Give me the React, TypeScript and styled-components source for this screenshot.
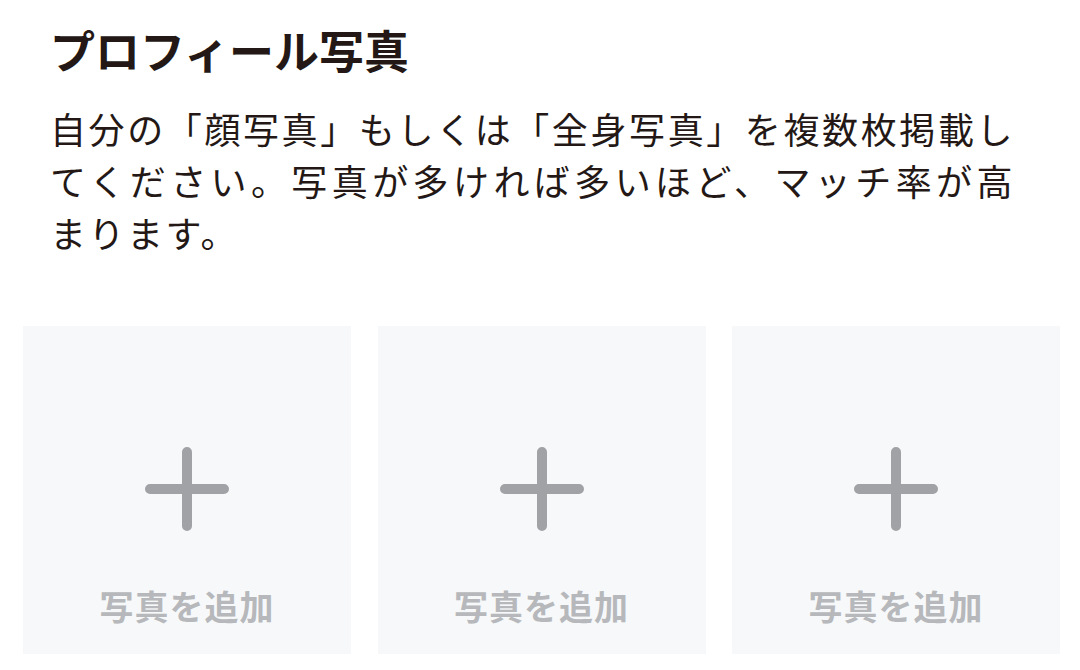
import React from 'react';
import styled, { createGlobalStyle } from 'styled-components';

const GlobalStyle = createGlobalStyle`
  html, body {
    margin: 0;
    padding: 0;
    background: #ffffff;
  }
  body {
    font-family: "Noto Sans CJK JP", "Noto Sans", sans-serif;
    color: #231815;
  }
`;

const Page = styled.div`
  width: 1080px;
  height: 670px;
  overflow: hidden;
  padding-top: 22px;
  box-sizing: border-box;
`;

const Header = styled.div`
  padding: 0 50px;
`;

const Title = styled.h1`
  margin: 0;
  font-size: 45px;
  line-height: 55px;
  font-weight: 700;
  letter-spacing: 0;
`;

const Description = styled.p`
  margin: 25px 0 0;
  width: 965px;
  font-size: 36px;
  line-height: 52px;
  letter-spacing: 2.5px;
  font-weight: 400;
`;

const Line = styled.span<{ $fill?: boolean }>`
  display: block;
  text-align: ${(p) => (p.$fill ? 'justify' : 'left')};
  text-align-last: ${(p) => (p.$fill ? 'justify' : 'auto')};
  white-space: nowrap;
`;

const Grid = styled.div`
  display: grid;
  grid-template-columns: repeat(3, 328px);
  column-gap: 26.5px;
  margin-top: 68px;
  padding-left: 23px;
`;

const Tile = styled.button`
  all: unset;
  width: 328px;
  height: 328px;
  background: #f7f8fa;
  display: flex;
  flex-direction: column;
  align-items: center;
  padding-top: 120px;
  box-sizing: border-box;
  cursor: pointer;
`;

const PlusIcon = styled.svg`
  width: 86px;
  height: 86px;
  display: block;
`;

const Label = styled.span`
  margin-top: 54px;
  font-size: 34px;
  line-height: 40px;
  font-weight: 700;
  color: #b6b8bb;
  letter-spacing: 1px;
`;

const Plus = () => (
  <PlusIcon viewBox="0 0 86 86" fill="none">
    <path
      d="M43 6V80M6 43H80"
      stroke="#a0a2a5"
      strokeWidth="10"
      strokeLinecap="round"
    />
  </PlusIcon>
);

const slots = [0, 1, 2];

export default function App() {
  return (
    <>
      <GlobalStyle />
      <Page>
        <Header>
          <Title>プロフィール写真</Title>
          <Description>
            <Line $fill>自分の「顔写真」もしくは「全身写真」を複数枚掲載し</Line>
            <Line $fill>てください。写真が多ければ多いほど、マッチ率が高</Line>
            <Line>まります。</Line>
          </Description>
        </Header>
        <Grid>
          {slots.map((i) => (
            <Tile key={i} type="button">
              <Plus />
              <Label>写真を追加</Label>
            </Tile>
          ))}
        </Grid>
      </Page>
    </>
  );
}
